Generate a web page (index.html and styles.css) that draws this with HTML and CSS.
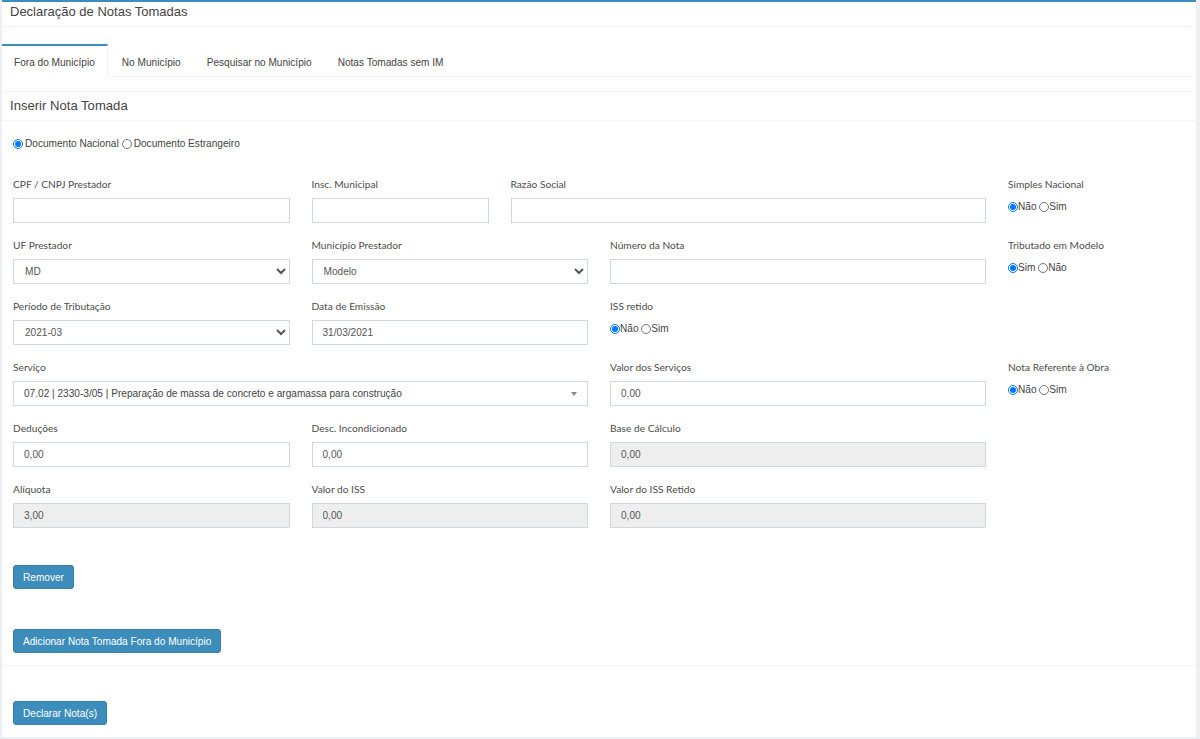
FILE: index.html
```html
<!DOCTYPE html>
<html lang="pt-BR">
<head>
<meta charset="utf-8">
<title>Declaração de Notas Tomadas</title>
<link rel="stylesheet" href="styles.css">
</head>
<body>
<div class="box">
  <div class="box-header"><h3 class="box-title">Declaração de Notas Tomadas</h3></div>
  <div class="tabs">
    <ul class="nav-tabs">
      <li class="tab active">Fora do Município</li>
      <li class="tab">No Município</li>
      <li class="tab">Pesquisar no Município</li>
      <li class="tab">Notas Tomadas sem IM</li>
    </ul>
    <div class="tab-content">
      <div class="sub-box">
        <div class="sub-header">Inserir Nota Tomada</div>
        <div class="sub-body">
          <div class="doc-type">
            <label class="radio-line"><input type="radio" name="doc" checked> Documento Nacional</label>
            <label class="radio-line"><input type="radio" name="doc"> Documento Estrangeiro</label>
          </div>

          <div class="row">
            <div class="fg span3"><label class="lbl">CPF / CNPJ Prestador</label><input class="ctl" type="text"></div>
            <div class="fg span2"><label class="lbl">Insc. Municipal</label><input class="ctl" type="text"></div>
            <div class="fg span5"><label class="lbl">Razão Social</label><input class="ctl" type="text"></div>
            <div class="fg span2"><label class="lbl">Simples Nacional</label>
              <div class="radios"><input type="radio" name="sn" checked>Não <input type="radio" name="sn">Sim</div></div>
          </div>

          <div class="row">
            <div class="fg span3"><label class="lbl">UF Prestador</label><select class="ctl sel"><option>MD</option></select></div>
            <div class="fg span3"><label class="lbl">Município Prestador</label><select class="ctl sel"><option>Modelo</option></select></div>
            <div class="fg span4"><label class="lbl">Número da Nota</label><input class="ctl" type="text"></div>
            <div class="fg span2"><label class="lbl">Tributado em Modelo</label>
              <div class="radios"><input type="radio" name="tm" checked>Sim <input type="radio" name="tm">Não</div></div>
          </div>

          <div class="row">
            <div class="fg span3"><label class="lbl">Período de Tributação</label><select class="ctl sel"><option>2021-03</option></select></div>
            <div class="fg span3"><label class="lbl">Data de Emissão</label><input class="ctl" type="text" value="31/03/2021"></div>
            <div class="fg span4"><label class="lbl">ISS retido</label>
              <div class="radios"><input type="radio" name="ir" checked>Não <input type="radio" name="ir">Sim</div></div>
          </div>

          <div class="row">
            <div class="fg span6"><label class="lbl">Serviço</label>
              <div class="ctl select2"><span class="s2-text">07.02 | 2330-3/05 | Preparação de massa de concreto e argamassa para construção</span><b class="s2-arrow"></b></div></div>
            <div class="fg span4"><label class="lbl">Valor dos Serviços</label><input class="ctl" type="text" value="0,00"></div>
            <div class="fg span2"><label class="lbl">Nota Referente à Obra</label>
              <div class="radios"><input type="radio" name="ob" checked>Não <input type="radio" name="ob">Sim</div></div>
          </div>

          <div class="row">
            <div class="fg span3"><label class="lbl">Deduções</label><input class="ctl" type="text" value="0,00"></div>
            <div class="fg span3"><label class="lbl">Desc. Incondicionado</label><input class="ctl" type="text" value="0,00"></div>
            <div class="fg span4"><label class="lbl">Base de Cálculo</label><input class="ctl" type="text" value="0,00" disabled></div>
          </div>

          <div class="row">
            <div class="fg span3"><label class="lbl">Alíquota</label><input class="ctl" type="text" value="3,00" disabled></div>
            <div class="fg span3"><label class="lbl">Valor do ISS</label><input class="ctl" type="text" value="0,00" disabled></div>
            <div class="fg span4"><label class="lbl">Valor do ISS Retido</label><input class="ctl" type="text" value="0,00" disabled></div>
          </div>

          <div class="btn-row remove-row"><button class="btn">Remover</button></div>
          <div class="btn-row add-row"><button class="btn">Adicionar Nota Tomada Fora do Município</button></div>
        </div>
      </div>
    </div>
  </div>
  <div class="box-footer"><button class="btn">Declarar Nota(s)</button></div>
</div>
</body>
</html>
```

FILE: styles.css
```css
* { box-sizing: border-box; }

html, body {
  margin: 0;
  padding: 0;
  background: #ecf0f5;
}

body {
  font-family: "Liberation Sans", Arial, sans-serif;
  font-size: 10.1px;
  color: #444;
}

.box {
  margin-left: 2px;
  width: 1194px;
  background: #fff;
  border-top: 2px solid #3c8dbc;
}

.box-header {
  padding: 1px 10px 5px 8px;
  border-bottom: 1px solid #f4f4f4;
}

.box-title {
  margin: 0;
  font-size: 13px;
  line-height: 18px;
  font-weight: normal;
  color: #444;
}

.tabs {
  padding-top: 17px;
}

.nav-tabs {
  list-style: none;
  margin: 0;
  padding: 0;
  display: flex;
  gap: 2px;
  border-bottom: 1px solid #f4f4f4;
}

.tab {
  padding: 2px 12px 0;
  line-height: 29px;
  border-top: 2px solid transparent;
  margin-bottom: -1px;
  font-size: 10.1px;
  color: #444;
  background: transparent;
}

.tab.active {
  border-top-color: #3c8dbc;
  border-right: 1px solid #f4f4f4;
  background: #fff;
}

.tab-content {
  padding-top: 14px;
  border-bottom: 1px solid #f4f4f4;
}

.sub-box {
  border-top: 1px solid #f4f4f4;
}

.sub-header {
  padding: 5px 8px;
  line-height: 18px;
  font-size: 13.1px;
  color: #444;
  border-bottom: 1px solid #f4f4f4;
}

.sub-body {
  padding-top: 16px;
  padding-bottom: 12px;
}

.doc-type {
  padding: 0 11px;
  line-height: 14px;
  margin-bottom: 26px;
  display: flex;
  align-items: center;
  gap: 3px;
}

.radio-line {
  display: inline-flex;
  align-items: center;
  gap: 2px;
  color: #444;
}

input[type="radio"] {
  width: 10px;
  height: 10px;
  margin: 0;
  vertical-align: -1px;
}

.row {
  display: grid;
  grid-template-columns: repeat(12, 1fr);
}

.span2 { grid-column: span 2; }
.span3 { grid-column: span 3; }
.span4 { grid-column: span 4; }
.span5 { grid-column: span 5; }
.span6 { grid-column: span 6; }

.fg {
  padding: 0 11px;
  margin-bottom: 15px;
}

.lbl {
  display: block;
  font-family: "Lato", "Open Sans", sans-serif;
  font-size: 10.2px;
  line-height: 15px;
  color: #4d4d4d;
  margin-bottom: 6px;
}

.ctl {
  display: block;
  width: 100%;
  height: 25px;
  border: 1px solid #d2d6de;
  border-radius: 0;
  padding: 0 10px;
  font-family: "Liberation Sans", Arial, sans-serif;
  font-size: 10.1px;
  color: #555;
  background: #fff;
  outline: none;
}

.ctl:disabled {
  background: #eee;
  color: #555;
}

.sel {
  padding: 0 2px 0 7px;
}

.select2 {
  display: flex;
  align-items: center;
  justify-content: space-between;
  border-color: #d2d6de;
}

.s2-text {
  white-space: nowrap;
  overflow: hidden;
  color: #444;
}

.s2-arrow {
  width: 0;
  height: 0;
  border-left: 3px solid transparent;
  border-right: 3px solid transparent;
  border-top: 4px solid #888;
}

.radios {
  line-height: 18px;
  font-size: 10.1px;
  color: #444;
  display: flex;
  align-items: center;
  white-space: pre;
}

.btn-row {
  padding: 0 11px;
}

.remove-row {
  margin-top: 22px;
}

.add-row {
  margin-top: 40px;
}

.btn {
  height: 24px;
  padding: 0 9px;
  font-family: "Liberation Sans", Arial, sans-serif;
  font-size: 10.1px;
  color: #fff;
  background: #3c8dbc;
  border: 1px solid #367fa9;
  border-radius: 3px;
  cursor: pointer;
}

.box-footer {
  padding: 35px 11px 12px;
}
```
